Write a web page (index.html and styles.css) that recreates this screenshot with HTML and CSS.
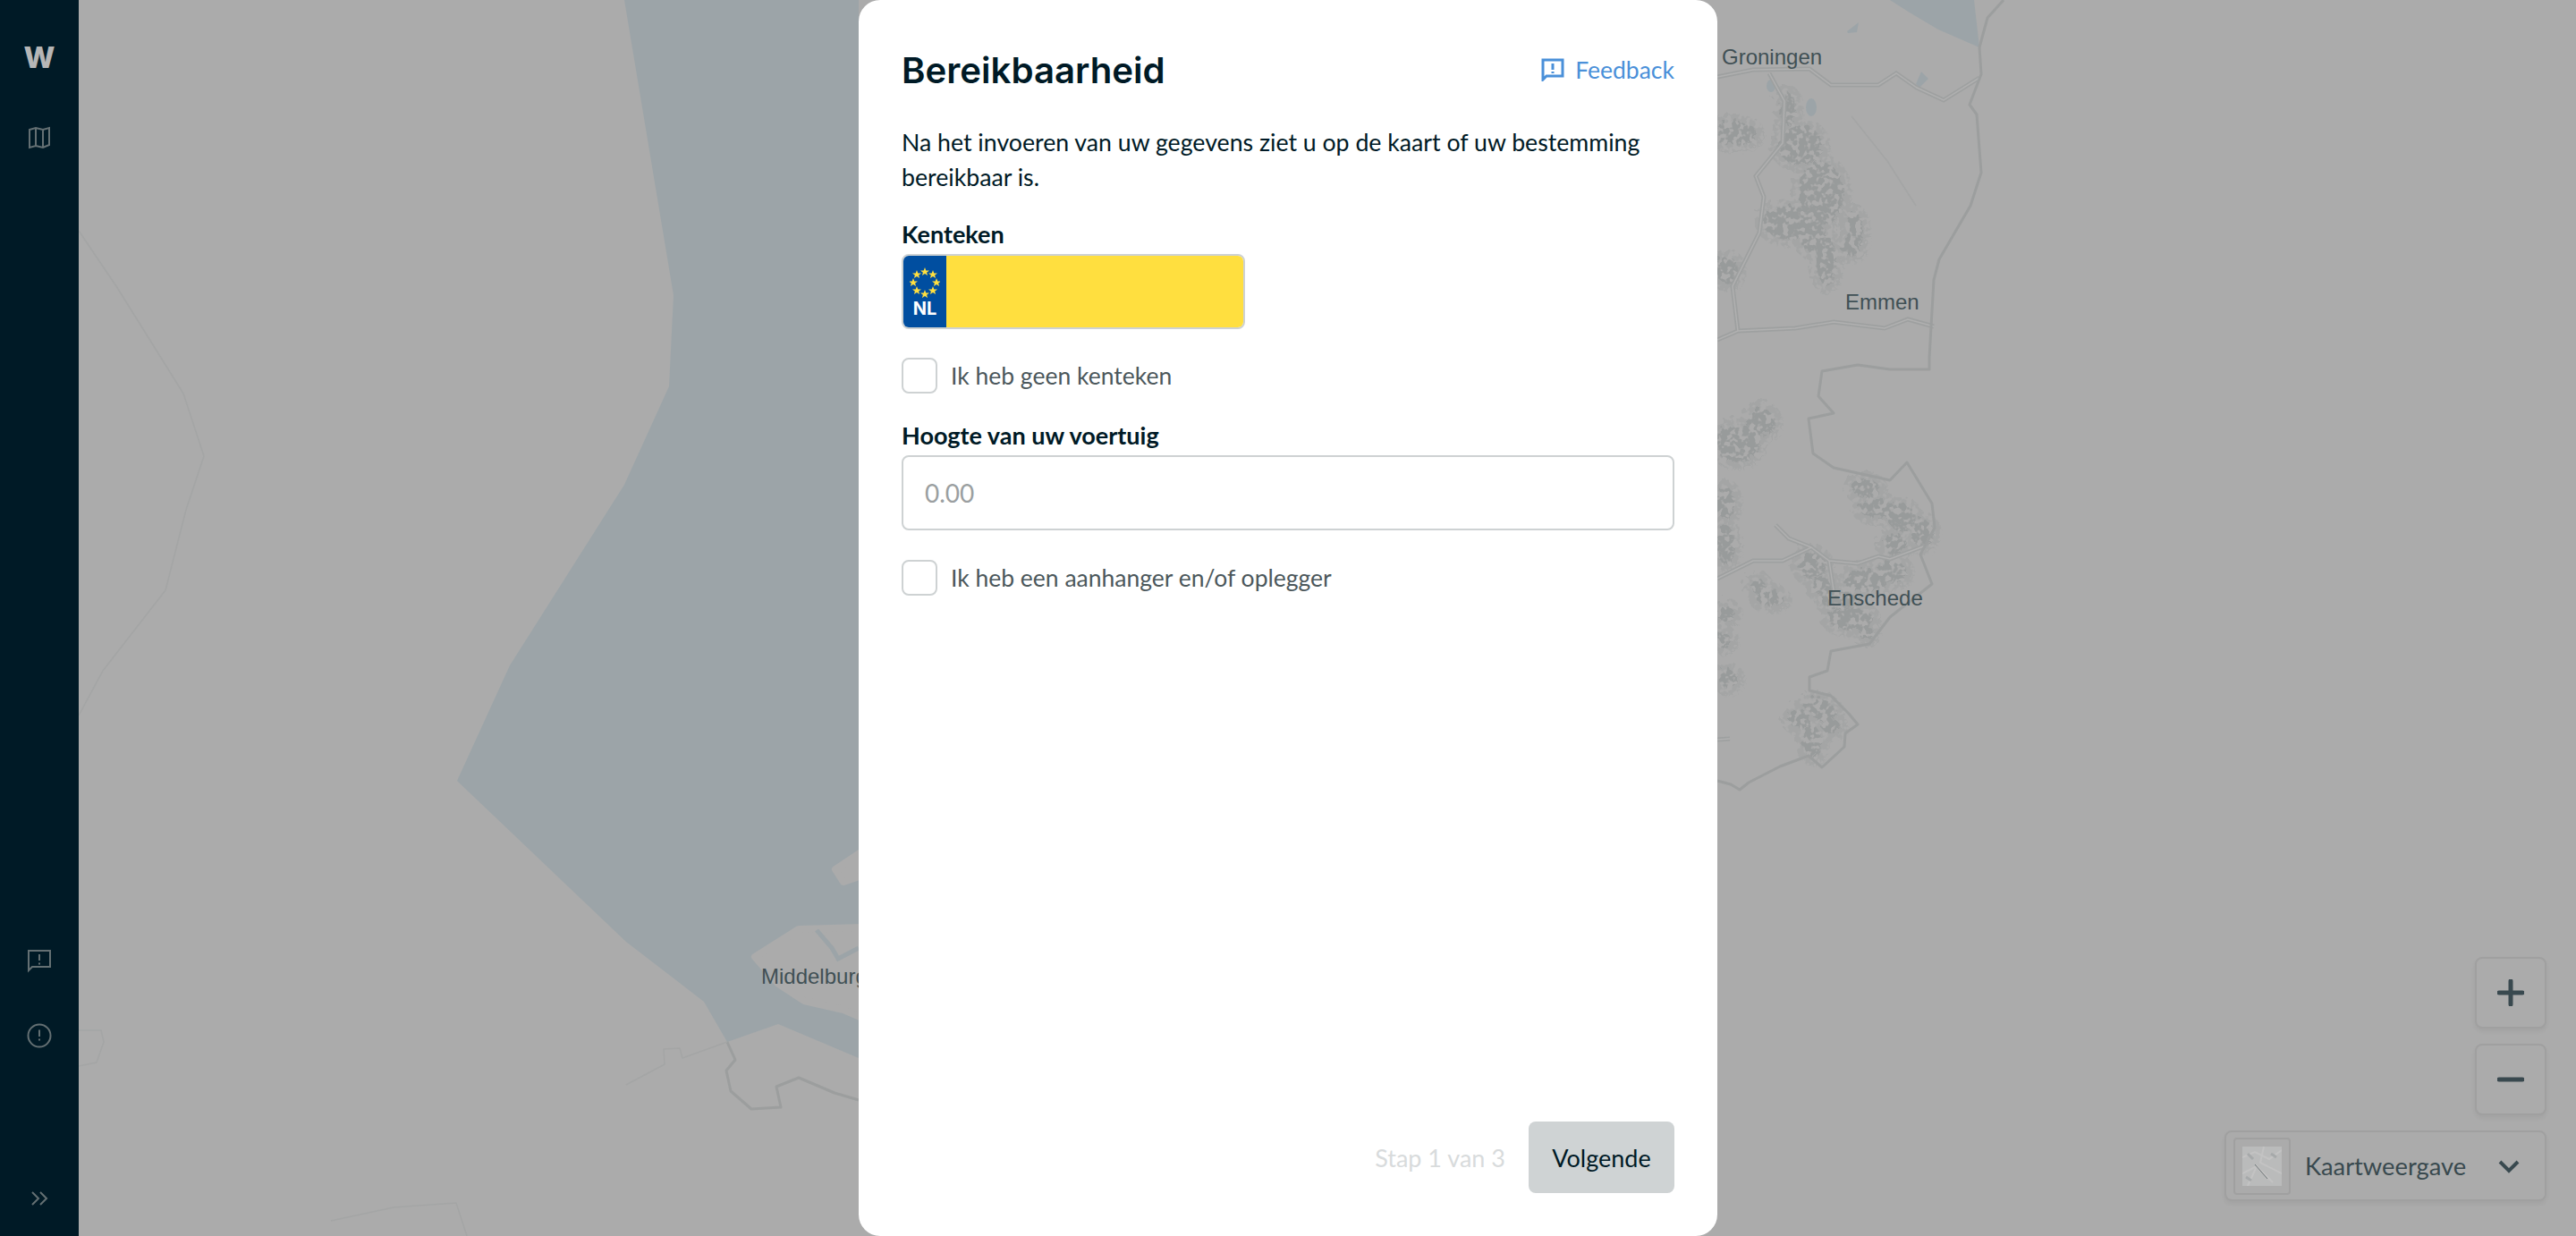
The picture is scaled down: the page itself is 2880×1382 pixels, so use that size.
FILE: index.html
```html
<!DOCTYPE html>
<html lang="nl">
<head>
  <meta charset="UTF-8">
  <title>Bereikbaarheid</title>
  <link rel="stylesheet" href="styles.css">
</head>
<body>
<div class="app">
  <!-- background map, traced roughly from the tiles -->
  <svg class="map" viewBox="0 0 2880 1382" aria-hidden="true">
    <defs>
      <filter id="rough" x="-10%" y="-10%" width="120%" height="120%">
        <feTurbulence type="fractalNoise" baseFrequency="0.16" numOctaves="2" seed="4" result="noise"/>
        <feDisplacementMap in="SourceGraphic" in2="noise" scale="18" result="moved"/>
        <feColorMatrix in="noise" type="matrix" values="0 0 0 0 0  0 0 0 0 0  0 0 0 0 0  0 0 0 9 -3.6" result="holes"/>
        <feComposite in="moved" in2="holes" operator="in"/>
      </filter>
      <g id="roads">
        <path d="M1920 86 L1960 78 L2023 77 L2047 95 L2100 95 L2120 82 L2143 98 L2173 112 L2213 87"/>
        <path d="M1978 82 L1995 113 L1993 160 L1963 197 L1972 220 L1967 260 L1937 320 L1943 370"/>
        <path d="M1920 380 L1943 370 L2007 367 L2050 360 L2107 367 L2133 357 L2162 365"/>
        <path d="M1920 647 L1960 627 L1993 627 L2025 612 L2045 627 L2077 630 L2100 622 L2113 625 L2153 610"/>
        <path d="M1985 587 L2000 602 L2025 612"/>
        <path d="M2045 627 L2050 660"/>
        <path d="M1920 827 L1934 826"/>
      </g>
      <g id="towns">
        <ellipse cx="2037" cy="217" rx="25" ry="35"/>
        <ellipse cx="2000" cy="250" rx="28" ry="18"/>
        <ellipse cx="2013" cy="163" rx="25" ry="22"/>
        <ellipse cx="1940" cy="150" rx="25" ry="13"/>
        <ellipse cx="2027" cy="263" rx="14" ry="20"/>
        <ellipse cx="2075" cy="260" rx="8" ry="22"/>
        <ellipse cx="2043" cy="293" rx="10" ry="28"/>
        <ellipse cx="2070" cy="278" rx="10" ry="9"/>
        <ellipse cx="1932" cy="303" rx="12" ry="15"/>
        <ellipse cx="2000" cy="123" rx="8" ry="18"/>
        <ellipse cx="1943" cy="497" rx="25" ry="20"/>
        <ellipse cx="1970" cy="473" rx="15" ry="15"/>
        <ellipse cx="1930" cy="563" rx="10" ry="18"/>
        <ellipse cx="1930" cy="610" rx="10" ry="22"/>
        <ellipse cx="2087" cy="547" rx="15" ry="10"/>
        <ellipse cx="2100" cy="570" rx="20" ry="10"/>
        <ellipse cx="2127" cy="580" rx="15" ry="15"/>
        <ellipse cx="2150" cy="597" rx="12" ry="15"/>
        <ellipse cx="2120" cy="610" rx="12" ry="12"/>
        <ellipse cx="2027" cy="633" rx="15" ry="15"/>
        <ellipse cx="2040" cy="657" rx="12" ry="10"/>
        <ellipse cx="2087" cy="650" rx="25" ry="12"/>
        <ellipse cx="2117" cy="640" rx="15" ry="12"/>
        <ellipse cx="2070" cy="693" rx="25" ry="12"/>
        <ellipse cx="2057" cy="672" rx="20" ry="10"/>
        <ellipse cx="1980" cy="670" rx="15" ry="8"/>
        <ellipse cx="1967" cy="657" rx="8" ry="8"/>
        <ellipse cx="1930" cy="687" rx="10" ry="8"/>
        <ellipse cx="1928" cy="717" rx="8" ry="8"/>
        <ellipse cx="1933" cy="760" rx="10" ry="10"/>
        <ellipse cx="2033" cy="790" rx="15" ry="8"/>
        <ellipse cx="2087" cy="708" rx="8" ry="8"/>
        <ellipse cx="2027" cy="830" rx="10" ry="18"/>
        <ellipse cx="2013" cy="805" rx="12" ry="10"/>
        <ellipse cx="2040" cy="797" rx="14" ry="10"/>
        <ellipse cx="2048" cy="813" rx="10" ry="8"/>
      </g>
    </defs>

    <g class="sea">
      <path d="M698 0 L753 330 L748 432 L698 542 L570 744 L511 873 L700 1053 L787 1120 L813 1165 L870 1145 L960 1183 L960 0 Z"/>
      <path d="M2113 0 L2135 14 L2167 33 L2213 53 L2207 0 Z"/>
      <path d="M2065 35 L2078 25 L2076 36 L2066 37 Z"/>
      <ellipse cx="1980" cy="96" rx="5" ry="7"/>
      <ellipse cx="2025" cy="120" rx="6" ry="10"/>
      <path d="M2142 94 L2148 80 L2156 88 L2146 98 Z"/>
    </g>

    <g class="land-islands">
      <path d="M964 1037 L893 1039 L844 1070 L870 1100 L899 1119 L943 1129 L964 1138 Z"/>
      <path d="M964 952 L934 972 L943 986 L964 979 Z"/>
    </g>
    <path class="water-line" d="M913 1040 L930 1060 L937 1072 L960 1060"/>
    <path class="water-line thin" d="M943 990 L930 1020 L930 1033"/>

    <use href="#towns" class="urban-halo" filter="url(#rough)"/>
    <use href="#towns" class="urban" filter="url(#rough)"/>

    <use href="#roads" class="road-edge"/>
    <use href="#roads" class="road-core"/>

    <g class="border">
      <path d="M2240 0 L2222 20 L2213 53 L2215 83 L2202 117 L2210 128 L2215 193 L2203 230 L2168 290 L2162 313 L2157 400 L2157 413 L2113 413 L2077 408 L2037 415 L2033 443 L2050 462 L2022 468 L2027 507 L2050 523 L2113 537 L2132 517 L2160 563 L2163 590 L2147 620 L2160 653 L2113 690 L2090 720 L2047 728 L2043 750 L2023 757 L2023 772 L2047 778 L2067 798 L2077 810 L2063 820 L2062 835 L2037 858 L2022 845 L1990 857 L1955 875 L1945 883 L1935 877 L1920 873"/>
      <path d="M813 1165 L822 1185 L812 1197 L817 1220 L840 1240 L873 1238 L868 1215 L893 1205 L933 1222 L960 1230"/>
    </g>
    <g class="border faint">
      <path d="M700 1213 L743 1190 L742 1173 L760 1172 L763 1183 L813 1165"/>
      <path d="M88 258 L130 320 L205 440 L228 510 L208 570 L185 660 L150 705 L115 750 L88 800"/>
      <path d="M88 1152 L113 1152 L116 1165 L108 1188 L88 1192"/>
      <path d="M370 1365 L440 1350 L510 1345 L522 1382"/>
      <path d="M2142 230 L2110 180 L2070 130"/>
    </g>

    <g class="place">
      <text x="1925" y="72">Groningen</text>
      <text x="2063" y="346">Emmen</text>
      <text x="2043" y="677">Enschede</text>
      <text x="851" y="1100">Middelburg</text>
    </g>
  </svg>

  <nav class="sidebar">
    <div class="side-item logo">W</div>
    <a class="side-item" href="#">
      <svg width="26" height="26" viewBox="0 0 26 26" class="side-icon">
        <path d="M2 4 L9 2 L17 4 L24 2 V21 L17 24 L9 22 L2 24 Z M9 2 V22 M17 4 V24"/>
      </svg>
    </a>
    <a class="side-item side-item-first" href="#">
      <svg width="28" height="28" viewBox="0 0 28 28" class="side-icon">
        <path d="M2 3 H26 V21 H6 L2 25 Z M14 7 V14 M14 16.5 V18.5"/>
      </svg>
    </a>
    <a class="side-item" href="#">
      <svg width="28" height="28" viewBox="0 0 28 28" class="side-icon">
        <circle cx="14" cy="14" r="12.5"/>
        <path d="M14 7.5 V15 M14 17.5 V19.5"/>
      </svg>
    </a>
    <a class="side-item side-item-last" href="#">
      <svg width="20" height="18" viewBox="0 0 20 18" class="side-icon">
        <path d="M2 2 L9 9 L2 16 M11 2 L18 9 L11 16"/>
      </svg>
    </a>
  </nav>

  <div class="map-controls">
    <button class="zoom-btn" type="button">
      <svg width="30" height="30" viewBox="0 0 30 30"><path d="M15 2 V28 M2 15 H28"/></svg>
    </button>
    <button class="zoom-btn" type="button">
      <svg width="30" height="30" viewBox="0 0 30 30"><path d="M2 15 H28"/></svg>
    </button>
    <div class="layer-select">
      <div class="layer-thumb">
        <svg width="44" height="44" viewBox="0 0 44 44">
          <rect width="44" height="44" fill="#e9eaea"/>
          <path d="M0 12 L14 6 L30 14 L44 4 M6 44 L16 22 L34 40 M24 0 L20 18 L44 30 M0 30 L16 22" fill="none" stroke="#f4f4f4" stroke-width="2"/>
          <path d="M14 20 L28 36" fill="none" stroke="#8a9496" stroke-width="1"/>
          <path d="M4 34 L10 38 M32 8 L38 12 M6 8 L12 14" fill="none" stroke="#d0d4d5" stroke-width="3"/>
        </svg>
      </div>
      <span class="layer-label">Kaartweergave</span>
      <svg class="layer-chevron" width="24" height="16" viewBox="0 0 24 16"><path d="M2 3 L12 13 L22 3"/></svg>
    </div>
  </div>

  <div class="overlay">
    <section class="modal">
      <header class="modal-head">
        <h1>Bereikbaarheid</h1>
        <a class="feedback" href="#">
          <svg width="26" height="26" viewBox="0 0 26 26">
            <path d="M2 2 H24 V20 H6 L2 24 Z M13 6 V13 M13 15 V17"/>
          </svg>
          Feedback
        </a>
      </header>

      <p class="intro">Na het invoeren van uw gegevens ziet u op de kaart of uw bestemming bereikbaar is.</p>

      <label class="field-label" for="plate">Kenteken</label>
      <div class="plate">
        <div class="plate-band">
          <svg width="34" height="34" viewBox="-17 -17 34 34">
            <defs>
              <polygon id="star" points="0,-5 1.3,-1.6 5,-1.5 2.1,.7 3.1,4.1 0,2.1 -3.1,4.1 -2.1,.7 -5,-1.5 -1.3,-1.6"/>
            </defs>
            <use href="#star" x="0" y="-12"/>
            <use href="#star" x="9" y="-9"/>
            <use href="#star" x="13" y="0"/>
            <use href="#star" x="9" y="9"/>
            <use href="#star" x="0" y="13"/>
            <use href="#star" x="-9" y="9"/>
            <use href="#star" x="-13" y="0"/>
            <use href="#star" x="-9" y="-9"/>
          </svg>
          <span>NL</span>
        </div>
        <input id="plate" class="plate-input" type="text">
      </div>

      <label class="check-row check-first">
        <input type="checkbox">
        <span>Ik heb geen kenteken</span>
      </label>

      <label class="field-label field-height" for="height">Hoogte van uw voertuig</label>
      <input id="height" class="text-input" type="text" placeholder="0.00">

      <label class="check-row check-second">
        <input type="checkbox">
        <span>Ik heb een aanhanger en/of oplegger</span>
      </label>

      <footer class="modal-foot">
        <span class="step">Stap 1 van 3</span>
        <button class="next" type="button">Volgende</button>
      </footer>
    </section>
  </div>
</div>
</body>
</html>
```

FILE: styles.css
```css
* {
  box-sizing: border-box;
}

html, body {
  margin: 0;
  padding: 0;
  height: 100%;
}

body {
  font-family: "Lato", "Noto Sans", sans-serif;
  color: #001a26;
  background: #d6d6d6;
  overflow: hidden;
}

.app {
  position: relative;
  width: 100%;
  height: 100%;
}

/* map */
.map {
  position: absolute;
  inset: 0;
  width: 100%;
  height: 100%;
}

.sea path, .sea ellipse {
  fill: #c3ced3;
}

.land-islands path {
  fill: #d6d6d6;
  stroke: #d6d6d6;
  stroke-width: 8;
  stroke-linejoin: round;
}

.water-line {
  fill: none;
  stroke: #c3ced3;
  stroke-width: 5;
}

.water-line.thin {
  stroke-width: 2;
}

.urban-halo {
  fill: #cdcfcf;
  stroke: #cdcfcf;
  stroke-width: 18;
}

.urban {
  fill: #bfc2c2;
}

.road-edge {
  fill: none;
  stroke: #c6c9c9;
  stroke-width: 5;
}

.road-core {
  fill: none;
  stroke: #dcdcdc;
  stroke-width: 1.5;
}

.border path {
  fill: none;
  stroke: #c3c6c6;
  stroke-width: 3;
  stroke-linejoin: round;
}

.border.faint path {
  stroke: #cdcfcf;
  stroke-width: 1.5;
}

.place text {
  font-family: "Liberation Sans", Arial, sans-serif;
  font-size: 24px;
  fill: #51656b;
}

/* sidebar */
.sidebar {
  position: absolute;
  top: 0;
  left: 0;
  bottom: 0;
  width: 88px;
  background: #002130;
  display: flex;
  flex-direction: column;
  padding-top: 22px;
}

.side-item {
  height: 84px;
  display: flex;
  align-items: center;
  justify-content: center;
  margin-bottom: 6px;
}

.side-item-first {
  margin-top: auto;
  margin-bottom: 0;
}

.side-item-last {
  margin-top: 92px;
  margin-bottom: 0;
}

.logo {
  font-family: "Inter", sans-serif;
  font-weight: 800;
  font-size: 33px;
  color: #e4e4e4;
}

.side-icon {
  fill: none;
  stroke: #7e8c90;
  stroke-width: 2;
}

/* map buttons */
.map-controls {
  position: absolute;
  right: 33px;
  bottom: 39px;
  display: flex;
  flex-direction: column;
  align-items: flex-end;
  gap: 17px;
}

.zoom-btn {
  width: 80px;
  height: 80px;
  padding: 0;
  background: #d6d6d6;
  border: 2px solid #c8c8c8;
  border-radius: 8px;
  box-shadow: 0 3px 5px rgba(0, 0, 0, 0.05);
  display: flex;
  align-items: center;
  justify-content: center;
}

.zoom-btn path {
  fill: none;
  stroke: #485c63;
  stroke-width: 5;
  stroke-linecap: round;
}

.layer-select {
  width: 360px;
  height: 79px;
  padding: 0 28px 0 8px;
  background: #d6d6d6;
  border: 2px solid #c8c8c8;
  border-radius: 8px;
  box-shadow: 0 3px 5px rgba(0, 0, 0, 0.05);
  display: flex;
  align-items: center;
}

.layer-thumb {
  width: 64px;
  height: 64px;
  border: 2px solid #c8c8c8;
  border-radius: 4px;
  display: flex;
  align-items: center;
  justify-content: center;
}

.layer-label {
  margin-left: 16px;
  font-size: 27.3px;
  color: #485c63;
}

.layer-chevron {
  margin-left: auto;
  fill: none;
  stroke: #485c63;
  stroke-width: 4;
}

/* modal */
.overlay {
  position: absolute;
  inset: 0;
  background: rgba(0, 0, 0, 0.2);
  display: flex;
  justify-content: center;
}

.modal {
  width: 960px;
  height: 100%;
  background: #fff;
  border-radius: 24px;
  padding: 48px;
  display: flex;
  flex-direction: column;
}

.modal-head {
  height: 60px;
  display: flex;
  align-items: center;
  justify-content: space-between;
}

.modal-head h1 {
  margin: 0;
  font-family: "Inter", sans-serif;
  font-size: 40.2px;
  font-weight: 600;
  color: #001a26;
}

.feedback {
  display: flex;
  align-items: center;
  gap: 12px;
  font-size: 26.5px;
  color: #4a90d9;
  text-decoration: none;
}

.feedback path {
  fill: none;
  stroke: #4a90d9;
  stroke-width: 3;
}

.intro {
  margin: 32px 0 0;
  font-size: 26.7px;
  line-height: 39px;
}

.field-label {
  display: block;
  margin-top: 26px;
  font-size: 27px;
  line-height: 36px;
  font-weight: 700;
}

.plate {
  width: 384px;
  height: 84px;
  margin-top: 4px;
  border: 2px solid #ced2d3;
  border-radius: 8px;
  overflow: hidden;
  display: flex;
}

.plate-band {
  width: 48px;
  background: #004ea0;
  display: flex;
  flex-direction: column;
  align-items: center;
  padding-top: 13px;
}

.plate-band svg {
  fill: #ffdf3f;
}

.plate-band span {
  margin-top: 1px;
  font-family: "Inter", sans-serif;
  font-size: 20px;
  line-height: 22px;
  font-weight: 700;
  color: #fff;
}

.plate-input {
  flex: 1;
  min-width: 0;
  border: 0;
  background: #ffdf3f;
  outline: none;
}

.check-row {
  display: flex;
  align-items: center;
  gap: 15px;
  font-size: 26.5px;
  color: #4c585c;
}

.check-row input {
  appearance: none;
  width: 40px;
  height: 40px;
  margin: 0;
  background: #fff;
  border: 2px solid #ced2d3;
  border-radius: 8px;
}

.check-first {
  margin-top: 32px;
}

.field-height {
  margin-top: 29px;
}

.text-input {
  width: 100%;
  height: 84px;
  margin-top: 4px;
  padding: 0 24px;
  border: 2px solid #ced2d3;
  border-radius: 8px;
  font-family: inherit;
  font-size: 28px;
  outline: none;
}

.text-input::placeholder {
  color: #9b9fa1;
  opacity: 1;
}

.check-second {
  margin-top: 33px;
}

.modal-foot {
  margin-top: auto;
  display: flex;
  align-items: center;
  justify-content: flex-end;
  gap: 26px;
}

.step {
  font-size: 27px;
  color: #d8dbdc;
}

.next {
  width: 163px;
  height: 80px;
  border: 0;
  border-radius: 8px;
  background: #cfd3d4;
  font-family: inherit;
  font-size: 27px;
  color: #001a26;
}
```
